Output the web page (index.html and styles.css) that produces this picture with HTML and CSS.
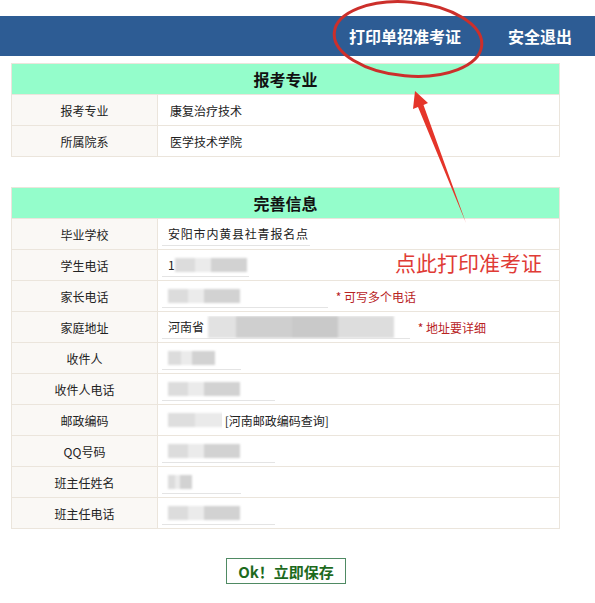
FILE: index.html
```html
<!DOCTYPE html>
<html lang="zh-CN">
  <head>
    <meta charset="UTF-8" />
    <meta name="viewport" content="width=device-width, initial-scale=1.0" />
    <title>完善信息</title>
    <link rel="stylesheet" href="styles.css">
  </head>
  <body>
    <div class="topbar">
      <a href="#" class="topbar-link">打印单招准考证</a>
      <a href="#" class="topbar-link">安全退出</a>
    </div>

    <table class="info-table first">
      <tr>
        <th colspan="2">报考专业</th>
      </tr>
      <tr>
        <td class="label">报考专业</td>
        <td class="value">康复治疗技术</td>
      </tr>
      <tr>
        <td class="label">所属院系</td>
        <td class="value">医学技术学院</td>
      </tr>
    </table>

    <form class="info-form">
      <table class="info-table">
        <tr>
          <th colspan="2">完善信息</th>
        </tr>
        <tr>
          <td class="label">毕业学校</td>
          <td class="value">
            <input class="field w148" type="text" value="安阳市内黄县社青报名点" />
          </td>
        </tr>
        <tr>
          <td class="label">学生电话</td>
          <td class="value">
            <div class="field w87">1<span class="mask m72"></span></div>
          </td>
        </tr>
        <tr>
          <td class="label">家长电话</td>
          <td class="value">
            <div class="field w166"><span class="mask m72"></span></div>
            <span class="hint">* 可写多个电话</span>
          </td>
        </tr>
        <tr>
          <td class="label">家庭地址</td>
          <td class="value">
            <div class="field w248">河南省<span class="mask big"></span></div>
            <span class="hint">* 地址要详细</span>
          </td>
        </tr>
        <tr>
          <td class="label">收件人</td>
          <td class="value">
            <div class="field w79"><span class="mask m47"></span></div>
          </td>
        </tr>
        <tr>
          <td class="label">收件人电话</td>
          <td class="value">
            <div class="field w113"><span class="mask m72"></span></div>
          </td>
        </tr>
        <tr>
          <td class="label">邮政编码</td>
          <td class="value">
            <div class="field w60"><span class="mask m60"></span></div>
            <a href="#" class="zip-link">[河南邮政编码查询]</a>
          </td>
        </tr>
        <tr>
          <td class="label">QQ号码</td>
          <td class="value">
            <div class="field w113"><span class="mask m72"></span></div>
          </td>
        </tr>
        <tr>
          <td class="label">班主任姓名</td>
          <td class="value">
            <div class="field w79"><span class="mask m24"></span></div>
          </td>
        </tr>
        <tr>
          <td class="label">班主任电话</td>
          <td class="value">
            <div class="field w113"><span class="mask m72"></span></div>
          </td>
        </tr>
      </table>

      <div class="actions">
        <button type="button" class="save-btn">Ok！立即保存</button>
      </div>
    </form>

    <!-- annotation drawn over the page -->
    <svg class="markup" width="595" height="603" viewBox="0 0 595 603">
      <ellipse cx="408" cy="39" rx="74" ry="37" transform="rotate(5 408 39)"
        fill="none" stroke="#cc2f2b" stroke-width="3" />
      <polygon points="415,91 428,103 423.5,105 466,223 418,107 413,109"
        fill="#e5352a" />
    </svg>
    <div class="markup-note">点此打印准考证</div>
  </body>
</html>
```

FILE: styles.css
```css
* {
  box-sizing: border-box;
}

body {
  margin: 0;
  padding-top: 16px;
  font-family: "Noto Sans CJK SC", "Liberation Sans", sans-serif;
  font-size: 12px;
  color: #222;
  background: #fff;
}

.topbar {
  height: 40px;
  background-color: #2d5c94;
  display: flex;
  justify-content: flex-end;
  align-items: center;
  gap: 47px;
  padding-right: 23px;
}

.topbar-link {
  color: #fff;
  font-size: 16px;
  font-weight: bold;
  text-decoration: none;
  line-height: 1;
}

.info-table {
  width: 549px;
  margin-left: 11px;
  border-collapse: collapse;
  border: 1px solid #ebe5dc;
}

.info-table.first {
  margin-top: 7px;
  margin-bottom: 30px;
}

.info-table th {
  height: 31px;
  background-color: #94fdcb;
  font-size: 16px;
  font-weight: bold;
  color: #111;
  text-align: center;
  padding: 0;
  border: 1px solid #ebe5dc;
}

.info-table td {
  height: 31px;
  padding: 0;
  border: 1px solid #ebe5dc;
}

.label {
  width: 146px;
  text-align: center;
  background-color: #faf8f5;
  color: #222;
}

.value {
  padding-left: 12px !important;
  color: #222;
}

.info-form .value {
  padding-left: 4px !important;
}

.field {
  display: inline-block;
  vertical-align: middle;
  height: 23px;
  line-height: 22px;
  padding: 0 0 0 6px;
  border: none;
  border-bottom: 1px solid #e4e4e4;
  background: transparent;
  font-family: "Noto Sans CJK SC", sans-serif;
  font-size: 12px;
  color: #222;
  white-space: nowrap;
  overflow: hidden;
}

input.field {
  letter-spacing: 0.8px;
  outline: none;
}

.w60 { width: 60px; border-bottom-color: transparent; }
.w79 { width: 79px; }
.w87 { width: 87px; }
.w113 { width: 113px; }
.w148 { width: 148px; }
.w166 { width: 166px; }
.w248 { width: 248px; }

.mask {
  display: inline-block;
  vertical-align: middle;
  height: 14px;
  margin-top: -3px;
  background: linear-gradient(90deg, #dcdcdc 0 28%, #ebebeb 28% 50%, #d2d2d2 50% 100%);
  filter: blur(1px);
}

.m24 { width: 24px; }
.m47 { width: 47px; }
.m60 { width: 60px; background: linear-gradient(90deg, #dedede 0 45%, #eaeaea 45% 100%); }
.m72 { width: 72px; }

.mask.big {
  width: 186px;
  height: 22px;
  margin-left: 4px;
  background: linear-gradient(90deg, #e2e2e2 0 15%, #cfcfcf 15% 45%, #c9c9c9 45% 70%, #dddddd 70% 100%);
}

.hint {
  margin-left: 5px;
  color: #b8231f;
  font-size: 12px;
  vertical-align: middle;
}

.zip-link {
  color: #222;
  text-decoration: none;
  vertical-align: middle;
}

.actions {
  margin-top: 29px;
  padding-left: 226px;
}

.save-btn {
  width: 120px;
  height: 26px;
  padding: 0;
  background: #fff;
  border: 1px solid #4f8a63;
  color: #1d6a1d;
  font-family: "Noto Sans CJK SC", sans-serif;
  font-size: 15px;
  font-weight: bold;
  cursor: pointer;
}

.markup {
  position: absolute;
  top: 0;
  left: 0;
  pointer-events: none;
}

.markup-note {
  position: absolute;
  top: 248px;
  left: 395px;
  color: #e03b36;
  font-size: 21px;
  line-height: 28px;
  pointer-events: none;
}
```
